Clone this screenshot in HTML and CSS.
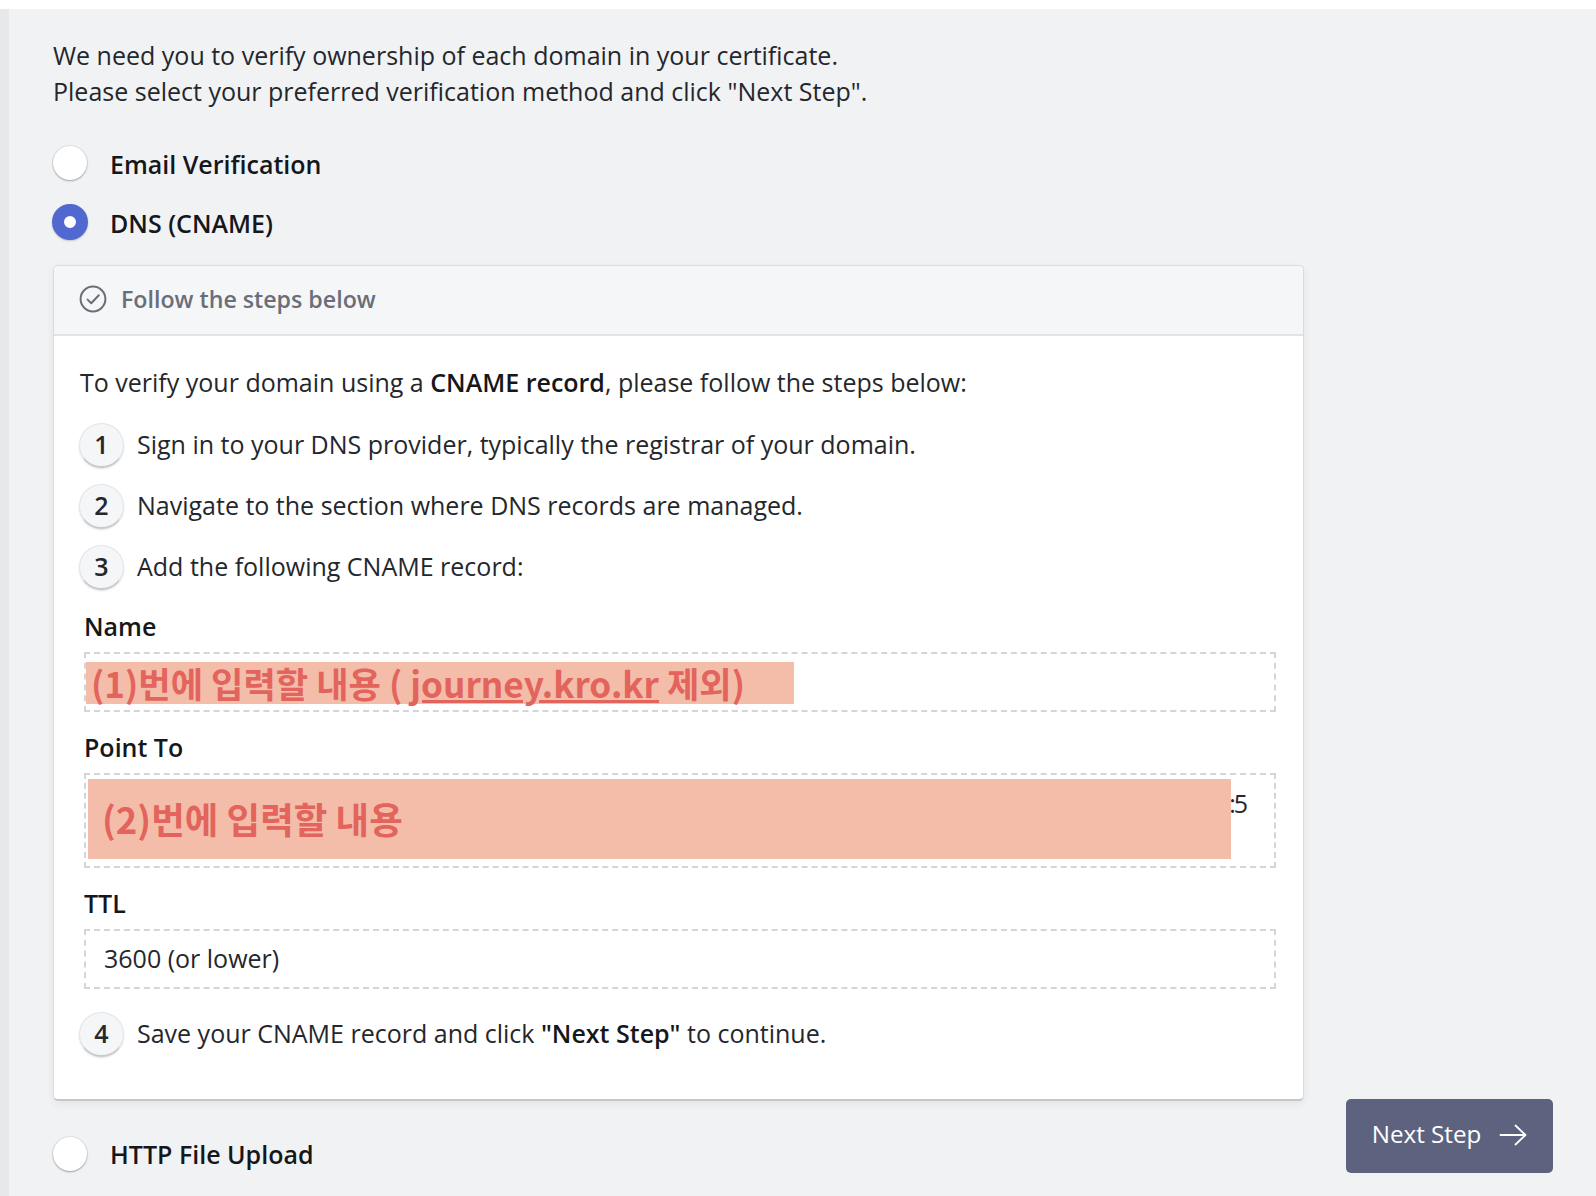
FILE: index.html
```html
<!DOCTYPE html>
<html lang="en">
<head>
    <meta charset="UTF-8">
    <meta name="viewport" content="width=device-width, initial-scale=1.0">
    <title>Verify domain</title>
    <link rel="stylesheet" href="styles.css">
</head>
<body>
    <div class="frame">
        <div class="rail"></div>
        <main class="main">
            <div class="col">
                <p class="intro">We need you to verify ownership of each domain in your certificate.<br>Please select your preferred verification method and click "Next Step".</p>

                <div class="radio-row first">
                    <span class="radio"></span>
                    <span class="radio-label">Email Verification</span>
                </div>
                <div class="radio-row second">
                    <span class="radio checked"></span>
                    <span class="radio-label">DNS (CNAME)</span>
                </div>

                <section class="panel">
                    <div class="panel-head">
                        <svg class="check-icon" width="28" height="28" viewBox="0 0 28 28" fill="none" stroke="#696e78" stroke-width="2" stroke-linecap="round" stroke-linejoin="round">
                            <circle cx="14" cy="14" r="12.4"/>
                            <path d="M8.6 14.6l3.6 3.6 7.6-8"/>
                        </svg>
                        <span>Follow the steps below</span>
                    </div>
                    <div class="panel-body">
                        <p class="lead">To verify your domain using a <b>CNAME record</b>, please follow the steps below:</p>

                        <div class="step step-1"><span class="num">1</span><span class="step-text">Sign in to your DNS provider, typically the registrar of your domain.</span></div>
                        <div class="step"><span class="num">2</span><span class="step-text">Navigate to the section where DNS records are managed.</span></div>
                        <div class="step"><span class="num">3</span><span class="step-text">Add the following CNAME record:</span></div>

                        <div class="field-label name-label">Name</div>
                        <div class="field field-name">
                            <div class="mask mask-name"><span class="note note-name">(1)번에 입력할 내용 (<u>journey.kro.kr</u> 제외)</span></div>
                        </div>

                        <div class="field-label">Point To</div>
                        <div class="field field-point">
                            <span class="value tail">:5</span>
                            <div class="mask mask-point"><span class="note note-point">(2)번에 입력할 내용</span></div>
                        </div>

                        <div class="field-label">TTL</div>
                        <div class="field field-ttl"><span class="value">3600 (or lower)</span></div>

                        <div class="step step-4"><span class="num">4</span><span class="step-text">Save your CNAME record and click <b>"Next Step"</b> to continue.</span></div>
                    </div>
                </section>

                <div class="radio-row third">
                    <span class="radio"></span>
                    <span>HTTP File Upload</span>
                </div>
            </div>

            <button class="next-btn">
                <span class="next-text">Next Step</span>
                <svg width="28" height="22" viewBox="0 0 28 22" fill="none" stroke="#fff" stroke-width="1.8" stroke-linecap="round" stroke-linejoin="round">
                    <path d="M1.5 11h25M16.5 1.5l10 9.5-10 9.5"/>
                </svg>
            </button>
        </main>
    </div>
</body>
</html>
```

FILE: styles.css
```css
html, body {
    margin: 0;
    padding: 0;
    height: 1196px;
    overflow: hidden;
    background: #fff;
}
body {
    font-family: "Open Sans", "Noto Sans", "Noto Sans CJK KR", sans-serif;
    font-size: 25px;
    color: #24272c;
}
p {
    margin: 0;
}
.frame {
    display: flex;
    height: 1187px;
    margin-top: 9px;
}
.rail {
    width: 9px;
    background: #e6e8ea;
}
.main {
    flex: 1;
    display: flex;
    align-items: flex-end;
    background: #f1f2f4;
    padding: 0 43px 23px 44px;
}
.col {
    width: 1251px;
    align-self: flex-start;
}
.intro {
    padding-top: 28px;
    line-height: 36px;
}
.radio-row {
    display: flex;
    align-items: center;
    height: 36px;
    gap: 23px;
    font-weight: 600;
    color: #15171a;
}
.radio-row.first {
    margin-top: 36px;
}
.radio-row.second {
    margin-top: 23px;
}
.radio-row.third {
    margin-top: 35px;
}
.radio-label {
    padding-top: 1px;
}
.radio {
    width: 34px;
    height: 34px;
    box-sizing: border-box;
    border-radius: 50%;
    background: #fff;
    box-shadow: 0 1px 2px rgba(0, 0, 0, 0.3), 0 0 0 1px rgba(0, 0, 0, 0.06);
}
.radio.checked {
    width: 36px;
    height: 36px;
    margin-left: -1px;
    margin-right: -1px;
    border: 12px solid #5068cf;
    box-shadow: 0 1px 2px rgba(0, 0, 0, 0.2);
}
.panel {
    margin-top: 25px;
    height: 836px;
    box-sizing: border-box;
    background: #fff;
    border: 1px solid #d9dbde;
    border-bottom: 2px solid #c4c6ca;
    border-radius: 5px;
    box-shadow: 0 3px 8px rgba(0, 0, 0, 0.06);
}
.panel-head {
    display: flex;
    align-items: center;
    gap: 14px;
    height: 65px;
    padding: 0 0 3px 25px;
    background: #f5f6f8;
    border-bottom: 2px solid #e2e3e6;
    border-radius: 5px 5px 0 0;
    font-size: 23.2px;
    font-weight: 600;
    color: #696e78;
}
.check-icon {
    margin-top: 1px;
}
.panel-body {
    padding: 28px 27px 0 26px;
}
.lead {
    line-height: 36px;
}
.step {
    display: flex;
    align-items: center;
    gap: 13px;
    height: 44px;
    margin-top: 17px;
}
.step-1 {
    margin-top: 23px;
}
.step-4 {
    margin-top: 23px;
}
.step-text {
    margin-bottom: 2px;
}
.num {
    flex: none;
    width: 45px;
    height: 45px;
    margin-left: -1px;
    padding-bottom: 2px;
    box-sizing: border-box;
    display: flex;
    align-items: center;
    justify-content: center;
    border-radius: 50%;
    background: #f5f6f8;
    border: 1px solid #e4e5e8;
    border-bottom: 2px solid #c9cacd;
    box-shadow: 0 1px 2px rgba(0, 0, 0, 0.12);
    font-weight: 600;
    color: #24272c;
}
.step b,
.lead b {
    font-weight: 600;
    color: #15171a;
}
.field-label {
    margin-top: 16px;
    margin-bottom: 5px;
    margin-left: 4px;
    height: 40px;
    line-height: 38px;
    font-weight: 600;
    color: #15171a;
}
.name-label {
    margin-top: 18px;
}
.field {
    position: relative;
    margin-left: 4px;
    box-sizing: border-box;
    border: 2px dashed #d3d5d9;
    padding-left: 18px;
    display: flex;
    align-items: center;
}
.field-name {
    height: 60px;
}
.field-point {
    height: 95px;
    justify-content: flex-end;
    align-items: flex-start;
    padding: 10px 28px 0 0;
}
.field-ttl {
    height: 60px;
}
.value {
    line-height: 36px;
    margin-bottom: 2px;
}
.tail {
    letter-spacing: -2px;
}
.mask {
    position: absolute;
    display: flex;
    align-items: center;
    background: #f3bdaa;
}
.mask-name {
    left: 0;
    top: 8px;
    width: 708px;
    height: 42px;
    padding-left: 5px;
    box-sizing: border-box;
}
.mask-point {
    left: 2px;
    top: 4px;
    width: 1143px;
    height: 80px;
    padding-left: 14px;
    box-sizing: border-box;
}
.note {
    font-family: "Noto Sans CJK KR", sans-serif;
    font-weight: 700;
    color: #e2645c;
    white-space: nowrap;
    margin-bottom: 2px;
}
.note-name {
    font-size: 35.2px;
}
.note-name u {
    margin-left: 8px;
}
.note-point {
    font-size: 36.5px;
}
.next-btn {
    flex: none;
    margin-left: 42px;
    width: 207px;
    height: 74px;
    display: flex;
    align-items: center;
    justify-content: center;
    gap: 18px;
    padding: 0 0 2px;
    background: #5d637f;
    color: #fff;
    border: none;
    border-radius: 5px;
    font: inherit;
    font-size: 24.2px;
    font-weight: 500;
}
.next-text {
    margin-bottom: 4px;
}
```
